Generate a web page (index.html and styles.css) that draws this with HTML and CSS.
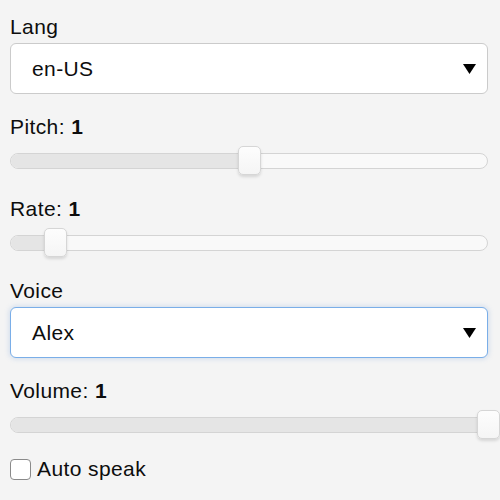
FILE: index.html
```html
<!DOCTYPE html>
<html>
<head>
<meta charset="utf-8">
<link rel="stylesheet" href="styles.css">
</head>
<body>
<div class="panel">
  <div class="group">
    <div class="label">Lang</div>
    <div class="select">
      <span>en-US</span>
      <svg class="arrow" width="13" height="10" viewBox="0 0 13 10"><path d="M0 0H13L6.5 10Z" fill="#000"/></svg>
    </div>
  </div>
  <div class="group">
    <div class="label">Pitch: <b>1</b></div>
    <div class="slider">
      <div class="track"><div class="fill" style="width:50%"></div></div>
      <div class="thumb" style="left:calc(50% - 11.5px)"></div>
    </div>
  </div>
  <div class="group">
    <div class="label">Rate: <b>1</b></div>
    <div class="slider">
      <div class="track"><div class="fill" style="width:9.5%"></div></div>
      <div class="thumb" style="left:calc(9.5% - 11.5px)"></div>
    </div>
  </div>
  <div class="group">
    <div class="label">Voice</div>
    <div class="select focused">
      <span>Alex</span>
      <svg class="arrow" width="13" height="10" viewBox="0 0 13 10"><path d="M0 0H13L6.5 10Z" fill="#000"/></svg>
    </div>
  </div>
  <div class="group">
    <div class="label">Volume: <b>1</b></div>
    <div class="slider">
      <div class="track"><div class="fill" style="width:100%"></div></div>
      <div class="thumb" style="left:calc(100% - 11.5px)"></div>
    </div>
  </div>
  <label class="check-row">
    <span class="checkbox"></span>
    <span>Auto speak</span>
  </label>
</div>
</body>
</html>
```
FILE: styles.css
```css
html, body {
  margin: 0;
  padding: 0;
  background: #f4f4f4;
}
body {
  font-family: "Liberation Sans", Arial, sans-serif;
  font-size: 21px;
  letter-spacing: 0.4px;
  color: #0d0d0d;
}
.panel {
  padding: 15px 12px 0 10px;
  display: flex;
  flex-direction: column;
  gap: 21px;
}
.group {
  display: flex;
  flex-direction: column;
}
.label {
  line-height: 24px;
  height: 24px;
}
.label b {
  font-weight: bold;
}
.select {
  margin-top: 4px;
  height: 51px;
  box-sizing: border-box;
  background: #fff;
  border: 1px solid #cbcbcb;
  border-radius: 6px;
  display: flex;
  align-items: center;
  justify-content: space-between;
  padding: 0 11px 0 21px;
}
.select span {
  line-height: 24px;
  padding-top: 1px;
}
.select.focused {
  border-color: #7aaee8;
  box-shadow: 0 0 5px 1px rgba(120, 160, 220, 0.28);
}
.slider {
  margin-top: 7px;
  position: relative;
  height: 30px;
  display: flex;
  align-items: center;
}
.track {
  width: 100%;
  height: 16px;
  box-sizing: border-box;
  border: 1px solid #d4d4d4;
  border-radius: 8px;
  background: #f9f9f9;
  overflow: hidden;
}
.fill {
  height: 100%;
  background: #e5e5e5;
}
.thumb {
  position: absolute;
  top: 0;
  width: 23px;
  height: 29px;
  box-sizing: border-box;
  border: 1px solid #d6d6d6;
  border-radius: 5px;
  background: linear-gradient(#fdfdfd, #f5f5f5);
  box-shadow: 0 2px 3px rgba(0, 0, 0, 0.12);
}
.check-row {
  margin-top: -4px;
  display: flex;
  align-items: center;
  gap: 6px;
  height: 24px;
  line-height: 24px;
}
.checkbox {
  width: 21px;
  height: 21px;
  box-sizing: border-box;
  border: 1px solid #8a8a8a;
  border-radius: 4px;
  background: #fff;
}
```
